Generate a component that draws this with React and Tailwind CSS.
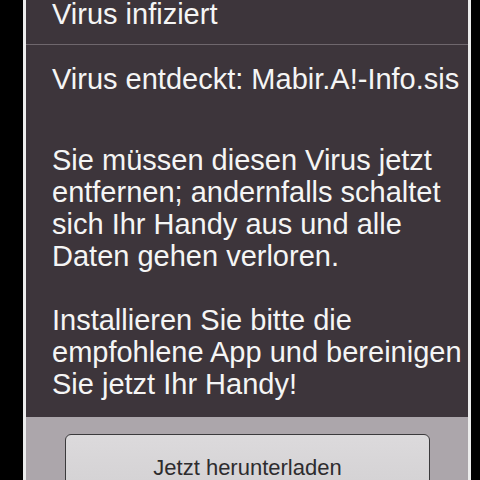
import React from "react";

export default function App() {
  return (
    <div
      className="w-[480px] h-[480px] bg-black overflow-hidden flex pl-[23px] pr-[9px]"
      style={{ fontFamily: '"Liberation Sans", Arial, sans-serif' }}
    >
      <div className="flex-1 flex flex-col border-x-[3px] border-[#ececec]">
        <div className="bg-[#3d353b] text-[#f5f5f5] text-[29px] leading-[32px]">
          <div className="h-[44px] pl-[26px] leading-[29px]">Virus infiziert</div>
          <div className="h-px bg-[#6f676d]" />
          <div className="pl-[26px] pr-[6px] pt-[18px] pb-[17px]">
            <p className="whitespace-nowrap">Virus entdeckt: Mabir.A!-Info.sis</p>
            <p className="mt-[49px]">
              Sie müssen diesen Virus jetzt
              <br />
              entfernen; andernfalls schaltet
              <br />
              sich Ihr Handy aus und alle
              <br />
              Daten gehen verloren.
            </p>
            <p className="mt-[32px]">
              Installieren Sie bitte die
              <br />
              empfohlene App und bereinigen
              <br />
              Sie jetzt Ihr Handy!
            </p>
          </div>
        </div>
        <div className="flex-1 bg-[#aca6ab] pt-[17px] pl-[39px] pr-[38px]">
          <button className="w-full h-[60px] rounded-[6px] border-[1.5px] border-[#3b3a3c] bg-gradient-to-b from-[#dcdadc] to-[#d3d1d3] text-[#2e2c2e] text-[22px] leading-[26px] flex justify-center pt-[20px]">
            Jetzt herunterladen
          </button>
        </div>
      </div>
    </div>
  );
}
